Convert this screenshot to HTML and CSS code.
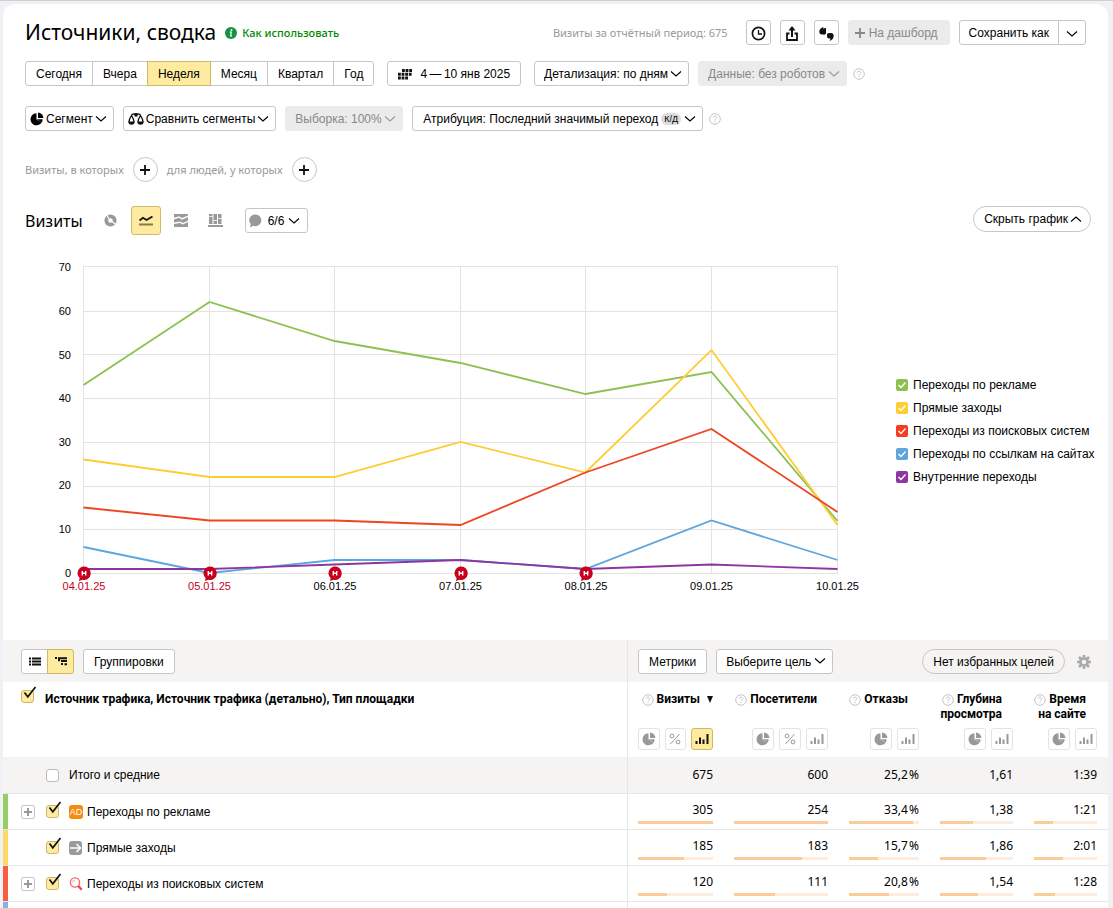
FILE: index.html
```html
<!DOCTYPE html>
<html lang="ru">
<head>
<meta charset="utf-8">
<title>Источники, сводка</title>
<link rel="stylesheet" href="styles.css">
</head>
<body>
<svg class="defs" aria-hidden="true">
  <symbol id="chev" viewBox="0 0 12 8"><path d="M1 1.500 6 6l5-4.500" fill="none" stroke="currentColor" stroke-width="1.100"/></symbol>
  <symbol id="chev-up" viewBox="0 0 12 8"><path d="M1 6.500 6 2l5 4.500" fill="none" stroke="currentColor" stroke-width="1.100"/></symbol>
  <symbol id="help" viewBox="0 0 12 12"><circle cx="6" cy="6" r="5.300" fill="none" stroke="#c4c4c4"/><path d="M4.300 4.800c0-2.200 3.400-2.200 3.400-.1C7.700 5.900 6 5.800 6 7.200M6 8v1.200" fill="none" stroke="#c4c4c4"/></symbol>
  <symbol id="pie" viewBox="0 0 14 14"><path d="M6.500 1.300A6 6 0 1 0 11.600 10.500L6.500 7.500z" fill="currentColor"/><path d="M8 .6V6h5.400A5.600 5.600 0 0 0 8 .6z" fill="currentColor"/><path d="M6.500 7.200h6.200a5 5 0 0 1-1.100 3.300z" fill="currentColor"/></symbol>
  <symbol id="percent" viewBox="0 0 12 12"><path d="M10.500 1 1.500 11" stroke="currentColor" fill="none"/><circle cx="3" cy="3" r="1.900" fill="none" stroke="currentColor"/><circle cx="9" cy="9" r="1.900" fill="none" stroke="currentColor"/></symbol>
  <symbol id="bars" viewBox="0 0 14 12"><path d="M1.500 11V8M5 11V4.500M8.500 11V6.500M12.500 11V1" stroke="currentColor" stroke-width="2" fill="none"/></symbol>
  <symbol id="tick" viewBox="0 0 16 16"><path d="M3.500 6.500 6.800 10.800 14.500 1" fill="none" stroke="#111" stroke-width="1.700"/></symbol>
  <symbol id="tick-white" viewBox="0 0 12 12"><path d="M2.500 6 5 8.500 9.500 3.500" fill="none" stroke="#fff" stroke-width="1.400"/></symbol>
  <symbol id="plus" viewBox="0 0 12 12"><path d="M6 1v10M1 6h10" fill="none" stroke="currentColor" stroke-width="1.800"/></symbol>
  <symbol id="plus-bold" viewBox="0 0 8 8"><path d="M4 0v8M0 4h8" fill="none" stroke="currentColor" stroke-width="2"/></symbol>
</svg>

<main class="card">
  <div class="report">
    <header class="row header">
      <h1>Источники, сводка</h1>
      <a class="howto" href="#"><svg width="12" height="12" viewBox="0 0 12 12"><circle cx="6" cy="6" r="6" fill="#159343"/><circle cx="6.500" cy="3" r="1" fill="#fff"/><path d="M4.800 5.200h1.500L5.600 9h1.500" fill="none" stroke="#fff" stroke-width="1.200"/></svg>Как использовать</a>
      <span class="muted total">Визиты за отчётный период: 675</span>
      <div class="actions">
        <button class="btn square" aria-label="История"><svg width="15" height="15" viewBox="0 0 15 15"><circle cx="7.500" cy="7.500" r="6.100" fill="none" stroke="#111" stroke-width="1.700"/><path d="M7.500 4v4H11" fill="none" stroke="#111" stroke-width="1.300"/></svg></button>
        <button class="btn square" aria-label="Экспорт"><svg width="12" height="15" viewBox="0 0 12 15"><path d="M3.500 7.500H1V14h10V7.500H8.500" fill="none" stroke="#111" stroke-width="1.800"/><path d="M6 11V3" stroke="#111" stroke-width="2"/><path d="M6 0 9.500 4.500h-7z" fill="#111"/></svg></button>
        <button class="btn square" aria-label="Комментарии"><svg width="15" height="14" viewBox="0 0 15 14"><path d="M4.500 0 4 1.500 7 1V6.500Q6.500 8 4 7.500 0 8 .3 4 1 1 4.500 0z" fill="#111"/><path d="M8 7.500Q8.200 6 10 6h2.500q2.200 0 2.200 2.500 0 4-4 5.500l.8-2.500H9.500Q8 11 8 9.500z" fill="#111"/></svg></button>
        <button class="btn off dash" disabled><svg width="12" height="12"><use href="#plus"/></svg>На дашборд</button>
        <div class="group">
          <button class="btn save">Сохранить как</button>
          <button class="btn more" aria-label="Ещё"><svg width="12" height="8"><use href="#chev"/></svg></button>
        </div>
      </div>
    </header>

    <div class="row period">
      <div class="group">
        <button class="btn">Сегодня</button>
        <button class="btn">Вчера</button>
        <button class="btn on">Неделя</button>
        <button class="btn">Месяц</button>
        <button class="btn">Квартал</button>
        <button class="btn">Год</button>
      </div>
      <button class="btn date"><svg width="14" height="11" viewBox="0 0 14 11"><path d="M4 1.500h10M0 5.300h14M0 9h10.500" fill="none" stroke="#111" stroke-width="3" stroke-dasharray="2.800 .8"/></svg>4&thinsp;—&thinsp;10 янв 2025</button>
      <div class="tight">
        <label class="drop"><select aria-label="Детализация"><option>Детализация: по дням</option></select><svg width="12" height="8"><use href="#chev"/></svg></label>
        <label class="drop off"><select aria-label="Данные" disabled><option>Данные: без роботов</option></select><svg width="12" height="8"><use href="#chev"/></svg></label>
        <svg class="help" width="12" height="12"><use href="#help"/></svg>
      </div>
    </div>

    <div class="row segments">
      <button class="btn icon-btn"><svg width="14" height="14"><use href="#pie"/></svg>Сегмент<svg width="12" height="8"><use href="#chev"/></svg></button>
      <button class="btn icon-btn"><svg width="16" height="14" viewBox="0 0 16 14"><g fill="none" stroke="#111" stroke-width="1.400"><path d="M3.500 3.500Q1 7.500 1 9.500a2.500 2.500 0 0 0 5 0Q6 7.500 3.500 3.500zM12.500 3.500Q10 7.500 10 9.500a2.500 2.500 0 0 0 5 0Q15 7.500 12.500 3.500zM3.500 3Q6 1 8 2.500 10 1 12.500 3"/></g><circle cx="8" cy="2.800" r="1.900" fill="#111"/><path d="M1 9.500h5a2.500 2.500 0 0 1-5 0zM10 9.500h5a2.500 2.500 0 0 1-5 0z" fill="#111"/></svg>Сравнить сегменты<svg width="12" height="8"><use href="#chev"/></svg></button>
      <label class="drop off"><select aria-label="Выборка" disabled><option>Выборка: 100%</option></select><svg width="12" height="8"><use href="#chev"/></svg></label>
      <button class="btn attribution">Атрибуция: Последний значимый переход <span class="badge">К/Д</span><svg width="12" height="8"><use href="#chev"/></svg></button>
      <svg class="help" width="12" height="12"><use href="#help"/></svg>
    </div>

    <div class="row filters muted">
      <span>Визиты, в которых</span>
      <button class="btn round" aria-label="Добавить условие визитов"><svg width="12" height="12"><use href="#plus"/></svg></button>
      <span>для людей, у которых</span>
      <button class="btn round" aria-label="Добавить условие людей"><svg width="12" height="12"><use href="#plus"/></svg></button>
    </div>

    <div class="row chart-bar">
      <h2>Визиты</h2>
      <div class="kinds">
        <button class="kind" aria-label="Круговая"><svg width="13" height="13" viewBox="0 0 13 13"><circle cx="6.500" cy="6.500" r="4.200" fill="none" stroke="#999" stroke-width="3.800"/><path d="M5.500 5.500 2 0M8 7.500l4.500 3.500" stroke="#fff" stroke-width="1.200"/></svg></button>
        <button class="kind on" aria-label="Линии"><svg width="14" height="11" viewBox="0 0 14 11"><path d="M.5 5.500 4 2.800l3.500 2.200L13.500 1.500" fill="none" stroke="#111" stroke-width="1.800"/><path d="M0 9.500h14" stroke="#8a7a45" stroke-width="2"/></svg></button>
        <button class="kind" aria-label="Области"><svg width="14" height="13" viewBox="0 0 14 13"><path d="M0 0h14v1.500L8 4 5 2.200 0 3.800zM0 5.500l5-1.800 3 2 6-2.700v3.500L9 9 6 7.500 0 8.500zM0 10l6-1 3 1.500L14 8v5H0z" fill="#999"/></svg></button>
        <button class="kind" aria-label="Колонки"><svg width="15" height="13" viewBox="0 0 15 13"><path d="M1 0h3.500v2H1zM1 2.800h3.500V10H1zM5.500 0H9v6H5.500zM5.500 6.800H9V10H5.500zM10 0h3.500v4H10zM10 4.800h3.500V10H10zM0 11h15v2H0z" fill="#999"/></svg></button>
      </div>
      <button class="btn notes"><svg width="13" height="14" viewBox="0 0 13 14"><path d="M6.500.5a6 5.800 0 1 1-2.300 11.200L1 13.500l.8-3.400A6 5.800 0 0 1 6.500.5z" fill="#999"/></svg>6/6<svg width="12" height="8"><use href="#chev"/></svg></button>
      <button class="btn pill hide">Скрыть график<svg width="12" height="8"><use href="#chev-up"/></svg></button>
    </div>

    <div class="chart">
      <svg class="plot" viewBox="25 250 871 350" role="img" aria-label="Визиты по дням">
        <path class="grid" d="M83 266.500h755M83 311.500h755M83 354.500h755M83 398.500h755M83 442.500h755M83 486.500h755M83 529.500h755M83 573.500h755M83.500 266v307M209.500 266v307M334.500 266v307M460.500 266v307M585.500 266v307M711.500 266v307M837.500 266v307"/>
        <g class="axis-y">
          <text x="71" y="271">70</text><text x="71" y="315">60</text><text x="71" y="359">50</text><text x="71" y="402">40</text><text x="71" y="446">30</text><text x="71" y="489">20</text><text x="71" y="533">10</text><text x="71" y="577">0</text>
        </g>
        <g class="lines">
          <path stroke="#8cc152" d="M83.500 385 209.500 302 334.500 341 460.500 363 585.500 394 711.500 372 837.500 521"/>
          <path stroke="#fc3" d="M83.500 459.500 209.500 477H334.500L460.500 442 585.500 472.500 711.500 350 837.500 525"/>
          <path stroke="#ee4523" d="M83.500 507.500 209.500 520.500H334.500L460.500 525 585.500 472.500 711.500 429 837.500 512"/>
          <path stroke="#5ca6e0" d="M83.500 547 209.500 573 334.500 560H460.500L585.500 569 711.500 520.500 837.500 560"/>
          <path stroke="#8e36a0" d="M83.500 569H209.500L334.500 564.500 460.500 560 585.500 569 711.500 564.500 837.500 569"/>
        </g>
        <g id="mark"><path fill="#c8001e" d="M84 566.500a6.700 6.700 0 1 1-1.500 13.200L79 581l.6-3A6.700 6.700 0 0 1 84 566.500z"/><path d="M82.300 571v4.500M85.700 571v4.500M82 573.200h4" stroke="#fff" stroke-width="1.400"/></g>
        <use href="#mark" x="126"/><use href="#mark" x="251"/><use href="#mark" x="377"/><use href="#mark" x="502"/>
        <g class="axis-x">
          <text class="off-day" x="84" y="590">04.01.25</text><text class="off-day" x="209.500" y="590">05.01.25</text><text x="335" y="590">06.01.25</text><text x="460.500" y="590">07.01.25</text><text x="586" y="590">08.01.25</text><text x="711.500" y="590">09.01.25</text><text x="837.500" y="590">10.01.25</text>
        </g>
      </svg>
      <div class="legend">
        <label><span class="box"><input type="checkbox" class="green" checked><svg><use href="#tick-white"/></svg></span>Переходы по рекламе</label>
        <label><span class="box"><input type="checkbox" class="yellow" checked><svg><use href="#tick-white"/></svg></span>Прямые заходы</label>
        <label><span class="box"><input type="checkbox" class="red" checked><svg><use href="#tick-white"/></svg></span>Переходы из поисковых систем</label>
        <label><span class="box"><input type="checkbox" class="blue" checked><svg><use href="#tick-white"/></svg></span>Переходы по ссылкам на сайтах</label>
        <label><span class="box"><input type="checkbox" class="violet" checked><svg><use href="#tick-white"/></svg></span>Внутренние переходы</label>
      </div>
    </div>
  </div>

  <div class="toolbar">
    <div class="tools-left">
      <div class="group">
        <button class="btn toggle" aria-label="Список"><svg width="12" height="9" viewBox="0 0 12 9"><path d="M0 1.500h2M0 4.500h2M0 7.500h2M3 1.500h9M3 4.500h9M3 7.500h9" stroke="#111" stroke-width="1.800"/></svg></button>
        <button class="btn toggle on" aria-label="Дерево"><svg width="12" height="9" viewBox="0 0 12 9"><path d="M0 1h2M3 1.200h9M3 3.200h2M6 4h6M6 7h2M9.500 7.200H12" stroke="#111" stroke-width="1.900"/></svg></button>
      </div>
      <button class="btn">Группировки</button>
    </div>
    <div class="tools-right">
      <button class="btn">Метрики</button>
      <label class="drop"><select aria-label="Цель"><option>Выберите цель</option></select><svg width="12" height="8"><use href="#chev"/></svg></label>
      <button class="btn pill goals">Нет избранных целей</button>
      <button class="gear" aria-label="Настройки"><svg width="14" height="14" viewBox="0 0 14 14"><circle cx="7" cy="7" r="3.700" fill="none" stroke="#aaa" stroke-width="2.800"/><path d="M7 0v2.500M7 11.500V14M0 7h2.500M11.500 7H14M2 2l2 2M10 10l2 2M12 2l-2 2M4 10l-2 2" stroke="#aaa" stroke-width="2.600"/></svg></button>
    </div>
  </div>

  <table>
    <colgroup><col><col class="c1"><col class="c2"><col class="c3"><col class="c4"><col class="c5"></colgroup>
    <thead>
      <tr>
        <th class="first"><label class="name all"><span class="check"><input type="checkbox" checked><svg><use href="#tick"/></svg></span>Источник трафика, Источник трафика (детально), Тип площадки</label></th>
        <th><div class="title sorted"><svg class="help" width="12" height="12"><use href="#help"/></svg><span>Визиты</span><svg class="sort" width="6" height="7" viewBox="0 0 6 7"><path d="M0 0h6L3 7z" fill="#111"/></svg></div>
          <div class="views"><button aria-label="Доли"><svg width="14" height="14"><use href="#pie"/></svg></button><button aria-label="Проценты"><svg width="12" height="12"><use href="#percent"/></svg></button><button class="on" aria-label="Столбцы"><svg width="14" height="12"><use href="#bars"/></svg></button></div></th>
        <th><div class="title"><svg class="help" width="12" height="12"><use href="#help"/></svg><span>Посетители</span></div>
          <div class="views"><button aria-label="Доли"><svg width="14" height="14"><use href="#pie"/></svg></button><button aria-label="Проценты"><svg width="12" height="12"><use href="#percent"/></svg></button><button aria-label="Столбцы"><svg width="14" height="12"><use href="#bars"/></svg></button></div></th>
        <th><div class="title"><svg class="help" width="12" height="12"><use href="#help"/></svg><span>Отказы</span></div>
          <div class="views"><button aria-label="Доли"><svg width="14" height="14"><use href="#pie"/></svg></button><button aria-label="Столбцы"><svg width="14" height="12"><use href="#bars"/></svg></button></div></th>
        <th><div class="title"><svg class="help" width="12" height="12"><use href="#help"/></svg><span>Глубина</span><span class="second">просмотра</span></div>
          <div class="views"><button aria-label="Доли"><svg width="14" height="14"><use href="#pie"/></svg></button><button aria-label="Столбцы"><svg width="14" height="12"><use href="#bars"/></svg></button></div></th>
        <th><div class="title"><svg class="help" width="12" height="12"><use href="#help"/></svg><span>Время</span><span class="second">на сайте</span></div>
          <div class="views"><button aria-label="Доли"><svg width="14" height="14"><use href="#pie"/></svg></button><button aria-label="Столбцы"><svg width="14" height="12"><use href="#bars"/></svg></button></div></th>
      </tr>
    </thead>
    <tbody>
      <tr class="sum">
        <td class="first"><div class="name"><span class="expand none"></span><label><span class="check"><input type="checkbox"></span>Итого и средние</label></div></td>
        <td>675</td><td>600</td><td>25,2&hairsp;%</td><td>1,61</td><td>1:39</td>
      </tr>
      <tr>
        <td class="first s-green"><div class="name"><button class="expand" aria-label="Развернуть"><svg width="8" height="8"><use href="#plus-bold"/></svg></button><label><span class="check"><input type="checkbox" checked><svg><use href="#tick"/></svg></span><span class="src"><span class="ad">AD</span>Переходы по рекламе</span></label></div></td>
        <td>305<div class="bar"><i style="width:100%"></i></div></td><td>254<div class="bar"><i style="width:100%"></i></div></td><td>33,4&hairsp;%<div class="bar"><i style="width:91%"></i></div></td><td>1,38<div class="bar"><i style="width:45%"></i></div></td><td>1:21<div class="bar"><i style="width:30%"></i></div></td>
      </tr>
      <tr>
        <td class="first s-yellow"><div class="name"><span class="expand none"></span><label><span class="check"><input type="checkbox" checked><svg><use href="#tick"/></svg></span><span class="src"><svg width="14" height="14" viewBox="0 0 14 14"><rect width="13" height="14" rx="3" fill="#9b9b9b"/><path d="M1 7h10M7.500 3 11.500 7l-4 4" fill="none" stroke="#fff" stroke-width="1.500"/></svg>Прямые заходы</span></label></div></td>
        <td>185<div class="bar"><i style="width:61%"></i></div></td><td>183<div class="bar"><i style="width:72%"></i></div></td><td>15,7&hairsp;%<div class="bar"><i style="width:42%"></i></div></td><td>1,86<div class="bar"><i style="width:63%"></i></div></td><td>2:01<div class="bar"><i style="width:46%"></i></div></td>
      </tr>
      <tr>
        <td class="first s-red"><div class="name"><button class="expand" aria-label="Развернуть"><svg width="8" height="8"><use href="#plus-bold"/></svg></button><label><span class="check"><input type="checkbox" checked><svg><use href="#tick"/></svg></span><span class="src"><svg width="14" height="14" viewBox="0 0 14 14"><circle cx="6" cy="5.500" r="4.600" fill="none" stroke="#f2646a" stroke-width="1.300"/><path d="M3.500 5.500A2.500 2.500 0 0 1 6 3" fill="none" stroke="#f7a6aa"/><path d="m9.300 9 3.400 3.800" stroke="#ee3f48" stroke-width="2.200"/></svg>Переходы из поисковых систем</span></label></div></td>
        <td>120<div class="bar"><i style="width:39%"></i></div></td><td>111<div class="bar"><i style="width:44%"></i></div></td><td>20,8&hairsp;%<div class="bar"><i style="width:57%"></i></div></td><td>1,54<div class="bar"><i style="width:52%"></i></div></td><td>1:28<div class="bar"><i style="width:33%"></i></div></td>
      </tr>
      <tr><td class="first s-blue"></td><td></td><td></td><td></td><td></td><td></td></tr>
    </tbody>
  </table>
</main>
</body>
</html>
```

FILE: styles.css
```css
* { box-sizing: border-box; }
body {
  margin: 0;
  height: 100vh;
  overflow: hidden;
  padding: 3px 5px 0 3px;
  border-top: 1px solid #cfcfd3;
  background: #f0f1f5;
  color: #000;
  font: 12px/18px "Noto Sans", sans-serif;
}
svg { display: block; flex: none; }
.defs { position: absolute; width: 0; height: 0; }
button, select, input { font: inherit; color: inherit; margin: 0; }
button { cursor: pointer; }

.card { min-height: 100%; background: #fff; border-radius: 12px 12px 0 0; overflow: hidden; }
.report { padding: 16px 17px 40px 22px; }
.row { display: flex; align-items: center; gap: 9px; }

h1, h2 { margin: 0; font-weight: 400; white-space: nowrap; }
h1 { font-size: 21px; line-height: 25px; }
h2 { font-size: 16px; line-height: 24px; }
.muted { color: #999; }
.howto, .total, .filters { font-size: 11px; }
th { font-family: Roboto, "Noto Sans", sans-serif; }
.howto { display: flex; align-items: center; gap: 5px; color: #008a00; text-decoration: none; font-weight: 500; white-space: nowrap; }
.total { margin-left: auto; white-space: nowrap; }
.header { padding-right: 5px; }
.actions { display: flex; gap: 9px; margin-left: 9px; }

.btn, .drop select {
  height: 25px;
  padding: 1px 10px 0;
  border: 1px solid #c6c6c6;
  border-radius: 3px;
  background: #fff;
  font: 12px/22px "Liberation Sans", Arial, sans-serif;
  white-space: nowrap;
}
.btn { display: inline-flex; align-items: center; justify-content: center; gap: 4px; }
.btn.square { width: 25px; padding: 2px 0 0; }
.btn.off, .drop.off select { background: #ebebeb; border-color: #ebebeb; color: #888; opacity: 1; }
.btn.dash { padding: 1px 11px 0 5px; gap: 3px; }
.btn.save { padding: 1px 9px 0; }
.btn.more { width: 28px; padding: 2px 0 0; }
.btn.on { background: #ffeba0; border-color: #cdb966; position: relative; }
.btn.pill { border-radius: 13px; }
.btn.round { width: 25px; padding: 0; border-radius: 50%; color: #111; }
.btn.date { gap: 8px; }
.icon-btn { padding: 1px 6px 0 4px; gap: 2px; }

.group { display: flex; }
.group .btn { border-radius: 0; }
.group .btn + .btn { margin-left: -1px; }
.group .btn:first-child { border-radius: 3px 0 0 3px; }
.group .btn:last-child { border-radius: 0 3px 3px 0; }

.drop { position: relative; display: inline-flex; align-items: center; }
.drop select { appearance: none; padding: 1px 20px 0 9px; }
.drop svg { position: absolute; right: 7px; pointer-events: none; }
.drop.off { color: #999; }
.tight { display: flex; align-items: center; gap: 9px; }
.help { margin-left: -3px; }

.period { margin-top: 16px; gap: 13px; }
.segments { margin-top: 20px; }
.attribution { padding: 1px 6px 0 10px; gap: 3px; }
.badge { padding: 0 3px; border-radius: 6px; background: #dcdcdc; font-size: 9px; line-height: 12px; }
.filters { margin-top: 26px; }
.chart-bar { margin-top: 24px; height: 29px; }
.kinds { display: flex; gap: 5px; margin-left: 4px; }
.kind { width: 30px; height: 29px; padding: 0; display: grid; place-items: center; border: 1px solid transparent; border-radius: 3px; background: none; }
.kind.on { background: #ffeba0; border-color: #cdb966; }
.notes { margin-left: 5px; padding: 0 7px 0 3px; }
.notes svg:first-child { margin-right: 2px; }
.hide { height: 26px; align-self: flex-start; margin-left: auto; padding: 0 8px 0 10px; gap: 2px; }

.chart { display: flex; margin-top: 15px; }
.plot { flex: 1; min-width: 0; height: auto; font: 11px "Liberation Sans", Arial, sans-serif; }
.grid { fill: none; stroke: #e3e3e3; }
.lines { fill: none; stroke-width: 1.8; }
.axis-y { text-anchor: end; }
.axis-x { text-anchor: middle; }
.off-day { fill: #c8001e; }
.legend { width: 195px; display: grid; gap: 5px; align-content: start; padding-top: 126px; font: 12px/18px "Liberation Sans", Arial, sans-serif; }
.legend label { display: flex; align-items: center; gap: 5px; white-space: nowrap; }
.box, .check { position: relative; flex: none; }
.box, .box svg, .box input { display: block; width: 12px; height: 12px; }
.box input { appearance: none; border-radius: 2px; }
.box svg { position: absolute; top: 0; left: 0; pointer-events: none; }
.green { background: #8cc152; }
.yellow { background: #fc3; }
.red { background: #f73c22; }
.blue { background: #5fa4df; }
.violet { background: #8e36a0; }

.toolbar { display: grid; grid-template-columns: 1fr 480px; background: #f5f4f2; }
.tools-left, .tools-right { display: flex; align-items: center; gap: 9px; height: 42px; }
.tools-left { padding-left: 18px; border-right: 1px solid #e6e6e6; }
.tools-right { padding: 0 17px 0 10px; }
.toggle { width: 27px; padding: 0; }
.goals { margin-left: auto; background: none; }
.gear { margin-left: 3px; padding: 2px 0 0; border: 0; background: none; }

table { width: 100%; table-layout: fixed; border-collapse: separate; border-spacing: 0; }
.c1 { width: 96px; }
.c2 { width: 115px; }
.c3 { width: 91px; }
.c4 { width: 94px; }
.c5 { width: 84px; }
th, td { padding: 0 11px 0 10px; text-align: right; vertical-align: top; white-space: nowrap; }
th { height: 75px; padding-top: 10px; line-height: 15px; font-weight: 700; }
td { height: 36px; padding-top: 7px; border-bottom: 1px solid #e6e6e6; }
.first { padding: 0 0 0 18px; text-align: left; border-right: 1px solid #e6e6e6; vertical-align: middle; }
th.first { padding-top: 8px; vertical-align: top; }
.sum td { height: 37px; padding-top: 9px; background: #f5f4f2; }
.sum .first, td.first { padding-top: 0; }
.s-green { box-shadow: inset 5px 0 #97cd66; }
.s-yellow { box-shadow: inset 5px 0 #ffd966; }
.s-red { box-shadow: inset 5px 0 #f75c44; }
.s-blue { box-shadow: inset 5px 0 #7db4e4; }

.name, .name label { display: flex; align-items: center; }
td .name { font-family: "Liberation Sans", Arial, sans-serif; }
.name { gap: 11px; }
.name label { gap: 10px; }
.all { align-items: flex-start; line-height: 18px; }
.check input { display: block; appearance: none; width: 13px; height: 13px; border: 1px solid #bbb; border-radius: 3px; background: #fff; }
.check input:checked { background: #ffeba0; border-color: #cdb966; }
.check svg { position: absolute; left: 0; top: -4px; width: 16px; height: 16px; pointer-events: none; }
.expand { width: 14px; height: 14px; padding: 0; display: grid; place-items: center; border: 1px solid #c6c6c6; border-radius: 2px; background: #fff; color: #999; }
.expand.none { border: 0; background: none; }
.src { display: flex; align-items: center; gap: 4px; }
.ad { width: 14px; height: 14px; border-radius: 3px; background: #f68b0f; color: #fff; font: 9px/14px "Liberation Sans", Arial, sans-serif; text-align: center; }

.title { height: 36px; padding-right: 11px; display: grid; grid-template-columns: 1fr auto; column-gap: 3px; align-content: start; align-items: center; }
.title.sorted { grid-template-columns: 1fr auto auto; padding-right: 0; }
.title .help { justify-self: end; margin: 0; }
.sort { margin-left: 4px; }
.title .second { grid-column: 1 / -1; }
.views { display: flex; justify-content: flex-end; gap: 5px; }
.views button { width: 22px; height: 22px; padding: 0; display: grid; place-items: center; border: 1px solid #e3e3e3; border-radius: 3px; background: #fff; color: #999; }
.views .on { background: #ffeba0; border-color: #cdb966; color: #111; }
.bar { height: 3px; margin-top: 2px; background: #fdebdd; }
.bar i { display: block; height: 100%; background: #fbcb98; }
```
